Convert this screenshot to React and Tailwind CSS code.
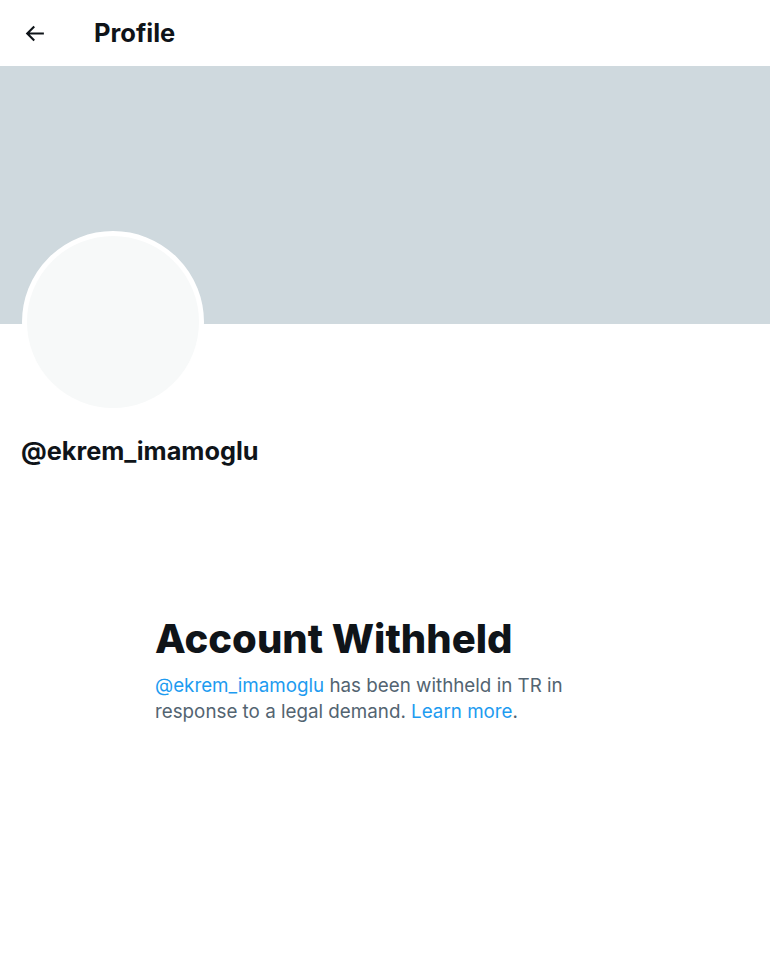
import React from "react";

const font = { fontFamily: "Inter, 'Noto Sans', sans-serif" };

const App = () => {
  return (
    <div className="w-[770px] h-[976px] bg-white text-[#0f1419]" style={font}>
      <div className="h-[66px] flex items-center px-[22px]">
        <svg viewBox="0 0 24 24" className="w-[25px] h-[25px]" fill="#0f1419">
          <path d="M7.414 13l5.043 5.04-1.414 1.42L3.586 12l7.457-7.46 1.414 1.42L7.414 11H21v2H7.414z" />
        </svg>
        <h1 className="ml-[47px] text-[25.5px] font-bold leading-none">Profile</h1>
      </div>
      <div className="h-[258px] bg-[#cfd9de]" />
      <div className="px-[21px]">
        <div className="-mt-[93px] ml-[1px] w-[182px] h-[182px] rounded-full bg-[#f7f9f9] border-[5px] border-white" />
        <div className="mt-[23px] text-[25.3px] font-bold leading-[30px]">@ekrem_imamoglu</div>
      </div>
      <div className="mx-auto w-[460px] mt-[149px]">
        <h2 className="text-[40px] font-extrabold leading-[48px]">Account Withheld</h2>
        <p className="mt-[10px] text-[18.8px] leading-[26px] text-[#536471]">
          <span className="text-[#1d9bf0]">@ekrem_imamoglu</span> has been withheld in TR in response to a legal demand.{" "}
          <span className="text-[#1d9bf0]">Learn more</span>.
        </p>
      </div>
    </div>
  );
};

export default App;
